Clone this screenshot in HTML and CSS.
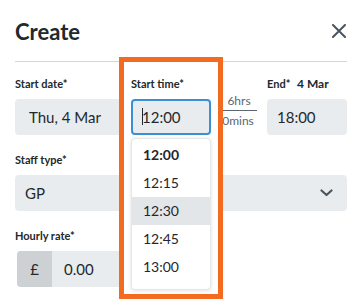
FILE: index.html
```html
<!DOCTYPE html>
<html lang="en">
<head>
    <meta charset="UTF-8">
    <meta name="viewport" content="width=device-width, initial-scale=1.0">
    <title>Create</title>
    <link rel="stylesheet" href="styles.css">
</head>
<body>
    <div class="modal">
        <div class="modal-header">
            <h2>Create</h2>
            <button class="close" aria-label="Close">
                <svg width="14" height="14" viewBox="0 0 14 14"><path d="M1 1L13 13M13 1L1 13" stroke="#4a5560" stroke-width="2" stroke-linecap="round"/></svg>
            </button>
        </div>

        <div class="time-row">
            <div class="field date-field">
                <label>Start date*</label>
                <div class="input">Thu, 4 Mar</div>
            </div>
            <div class="field start-field">
                <label>Start time*</label>
                <div class="input focused"><span class="caret"></span>12:00</div>
                <ul class="dropdown">
                    <li class="selected">12:00</li>
                    <li>12:15</li>
                    <li class="hover">12:30</li>
                    <li>12:45</li>
                    <li>13:00</li>
                </ul>
            </div>
            <div class="duration">
                <span>6hrs</span>
                <span class="mins">0mins</span>
            </div>
            <div class="field end-field">
                <label>End* <span class="end-date">4 Mar</span></label>
                <div class="input">18:00</div>
            </div>
        </div>

        <div class="field">
            <label>Staff type*</label>
            <div class="input select">
                <span class="gp">GP</span>
                <svg width="13" height="8" viewBox="0 0 13 8"><path d="M1.5 1.5L6.5 6L11.5 1.5" fill="none" stroke="#4a5560" stroke-width="2.2" stroke-linecap="round" stroke-linejoin="round"/></svg>
            </div>
        </div>

        <div class="field">
            <label>Hourly rate*</label>
            <div class="rate">
                <span class="prefix">£</span>
                <span class="amount">0.00</span>
            </div>
        </div>

        <div class="highlight"></div>
    </div>
</body>
</html>
```

FILE: styles.css
```css
body {
    margin: 0;
    background: #fff;
    font-family: Lato, "Open Sans", Arial, sans-serif;
    color: #23282c;
}
.modal {
    position: relative;
    width: 332px;
    height: 304px;
    padding: 0 11px 0 15px;
    overflow: hidden;
}
.modal-header {
    display: flex;
    justify-content: space-between;
    align-items: center;
    height: 61px;
    border-bottom: 1px solid #d3d5d7;
}
.modal-header h2 {
    margin: 0;
    padding-top: 1px;
    font-size: 22px;
    font-weight: 700;
    color: #23282c;
}
.close {
    background: none;
    border: none;
    padding: 0;
    margin-right: 1px;
    width: 14px;
    height: 14px;
    display: flex;
}
.time-row {
    display: grid;
    grid-template-columns: 116px 80px 56px 80px;
    padding-top: 15px;
}
.date-field {
    margin-right: 10px;
}
.start-field {
    position: relative;
    z-index: 2;
}
.field {
    margin-bottom: 18px;
}
label {
    display: block;
    font-size: 11px;
    font-weight: 700;
    line-height: 14px;
    margin-bottom: 8px;
    color: #23282c;
}
.end-date {
    margin-left: 4px;
    font-size: 12px;
}
.input {
    height: 36px;
    box-sizing: border-box;
    background: #e9ecee;
    border-radius: 4px;
    font-size: 15px;
    line-height: 36px;
    padding-left: 14px;
    color: #23282c;
}
.end-field .input {
    padding-left: 10px;
}
.focused {
    border: 2px solid #3b8fd3;
    line-height: 32px;
    padding-left: 9px;
    position: relative;
}
.caret {
    position: absolute;
    left: 9px;
    top: 7px;
    width: 1px;
    height: 17px;
    background: #23282c;
}
.dropdown {
    position: absolute;
    top: 61px;
    left: 0;
    width: 80px;
    height: 152px;
    box-sizing: border-box;
    margin: 0;
    padding: 2px 0 0;
    list-style: none;
    background: #fff;
    border: 1px solid #e4e6e8;
    border-radius: 4px;
    box-shadow: 0 1px 4px rgba(0, 0, 0, 0.12);
}
.dropdown li {
    height: 28px;
    line-height: 28px;
    padding-left: 11px;
    font-size: 14px;
}
.dropdown .selected {
    font-weight: 700;
}
.dropdown .hover {
    background: #e3e6e8;
}
.duration {
    display: flex;
    flex-direction: column;
    align-items: center;
    padding-top: 14px;
    font-size: 12px;
    color: #5b6670;
    line-height: 14px;
}
.duration span {
    width: 37px;
    text-align: center;
    padding: 3px 0 2px;
}
.duration .mins {
    border-top: 1px solid #5b6670;
    margin-right: 2px;
}
.select {
    display: flex;
    justify-content: space-between;
    align-items: center;
    padding: 0 14px 0 10px;
}
.rate {
    display: flex;
    height: 36px;
    width: 120px;
    margin: 2px 0 0 2px;
    border-radius: 4px;
    overflow: hidden;
    background: #e9ecee;
    font-size: 15px;
}
.prefix {
    width: 35px;
    background: #cdd1d4;
    display: flex;
    align-items: center;
    justify-content: center;
}
.amount {
    display: flex;
    align-items: center;
    padding-left: 12px;
}
.highlight {
    position: absolute;
    z-index: 1;
    left: 119px;
    top: 57px;
    width: 94px;
    height: 232px;
    border: 5px solid #f26b21;
    background: #fff;
}
```
